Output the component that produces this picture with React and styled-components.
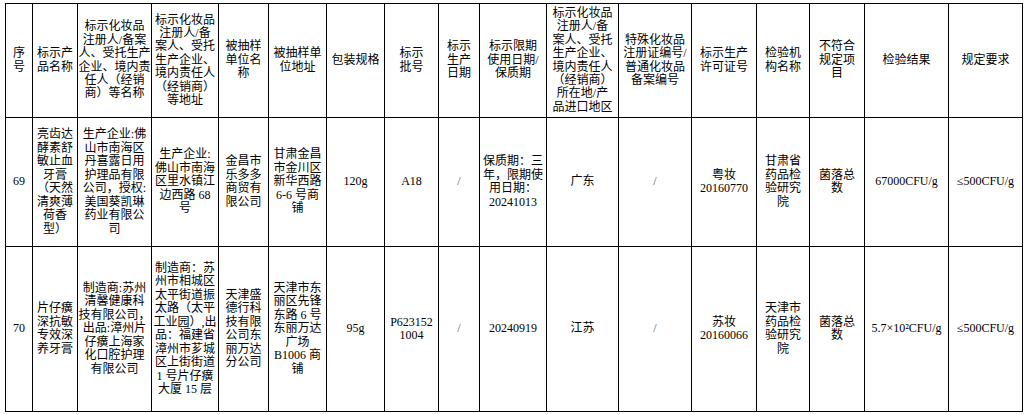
import React from "react";
import styled, { createGlobalStyle } from "styled-components";

const GlobalStyle = createGlobalStyle`
  html, body {
    margin: 0;
    padding: 0;
    background: #ffffff;
  }
  body {
    font-family: "Liberation Serif", "Noto Sans CJK SC", serif;
    color: #000;
  }
`;

const COLS = [27, 45, 74, 67, 50, 58, 58, 54, 41, 67, 72, 73, 65, 53, 55, 84, 74];
const ROWS = [114, 129, 165];

const Page = styled.div`
  padding: 3px 0 0 5px;
`;

const Sheet = styled.div`
  display: grid;
  grid-template-columns: ${COLS.map((w) => `${w}px`).join(" ")};
  grid-template-rows: ${ROWS.map((h) => `${h}px`).join(" ")};
  width: fit-content;
  border-left: 1px solid #000;
  border-top: 1px solid #000;
`;

const Cell = styled.div`
  box-sizing: border-box;
  border-right: 1px solid #000;
  border-bottom: 1px solid #000;
  display: flex;
  flex-direction: column;
  align-items: center;
  justify-content: center;
  text-align: center;
  font-family: "Liberation Serif", "Noto Sans CJK SC", serif;
  font-size: 12px;
  line-height: 13.5px;
  white-space: nowrap;
  color: ${(p) => (p.$muted ? "#555" : "#000")};
`;

const HeadCell = styled(Cell)`
  line-height: 13.4px;
`;

const Line = styled.span`
  display: block;
`;

const header = [
  ["序", "号"],
  ["标示产", "品名称"],
  ["标示化妆品", "注册人/备案", "人、受托生产", "企业、境内责", "任人（经销", "商）等名称"],
  ["标示化妆品", "注册人/备", "案人、受托", "生产企业、", "境内责任人", "（经销商）", "等地址"],
  ["被抽样", "单位名", "称"],
  ["被抽样单", "位地址"],
  ["包装规格"],
  ["标示", "批号"],
  ["标示", "生产", "日期"],
  ["标示限期", "使用日期/", "保质期"],
  ["标示化妆品", "注册人/备", "案人、受托", "生产企业、", "境内责任人", "（经销商）", "所在地/产", "品进口地区"],
  ["特殊化妆品", "注册证编号/", "普通化妆品", "备案编号"],
  ["标示生产", "许可证号"],
  ["检验机", "构名称"],
  ["不符合", "规定项", "目"],
  ["检验结果"],
  ["规定要求"],
];

const rows = [
  [
    ["69"],
    ["亮齿达", "酵素舒", "敏止血", "牙膏", "（天然", "清爽薄", "荷香", "型）"],
    ["生产企业:佛", "山市南海区", "丹喜露日用", "护理品有限", "公司，授权:", "美国葵凯琳", "药业有限公", "司"],
    ["生产企业:", "佛山市南海", "区里水镇江", "边西路 68", "号"],
    ["金昌市", "乐多多", "商贸有", "限公司"],
    ["甘肃金昌", "市金川区", "新华西路", "6-6 号商", "铺"],
    ["120g"],
    ["A18"],
    ["/"],
    ["保质期：三", "年，限期使", "用日期：", "20241013"],
    ["广东"],
    ["/"],
    ["粤妆", "20160770"],
    ["甘肃省", "药品检", "验研究", "院"],
    ["菌落总", "数"],
    ["67000CFU/g"],
    ["≤500CFU/g"],
  ],
  [
    ["70"],
    ["片仔癀", "深抗敏", "专效深", "养牙膏"],
    ["制造商:苏州", "清馨健康科", "技有限公司，", "出品:漳州片", "仔癀上海家", "化口腔护理", "有限公司"],
    ["制造商：苏", "州市相城区", "太平街道振", "太路（太平", "工业园）,出", "品：福建省", "漳州市芗城", "区上街街道", "1 号片仔癀", "大厦 15 层"],
    ["天津盛", "德行科", "技有限", "公司东", "丽万达", "分公司"],
    ["天津市东", "丽区先锋", "东路 6 号", "东丽万达", "广场", "B1006 商", "铺"],
    ["95g"],
    ["P623152", "1004"],
    ["/"],
    ["20240919"],
    ["江苏"],
    ["/"],
    ["苏妆", "20160066"],
    ["天津市", "药品检", "验研究", "院"],
    ["菌落总", "数"],
    ["5.7×10²CFU/g"],
    ["≤500CFU/g"],
  ],
];

export default function App() {
  return (
    <>
      <GlobalStyle />
      <Page>
        <Sheet>
          {header.map((lines, i) => (
            <HeadCell key={`h${i}`}>
              {lines.map((t, j) => (
                <Line key={j}>{t}</Line>
              ))}
            </HeadCell>
          ))}
          {rows.map((row, r) =>
            row.map((lines, i) => (
              <Cell key={`r${r}c${i}`} $muted={lines.length === 1 && lines[0] === "/"}>
                {lines.map((t, j) => (
                  <Line key={j}>{t}</Line>
                ))}
              </Cell>
            ))
          )}
        </Sheet>
      </Page>
    </>
  );
}
